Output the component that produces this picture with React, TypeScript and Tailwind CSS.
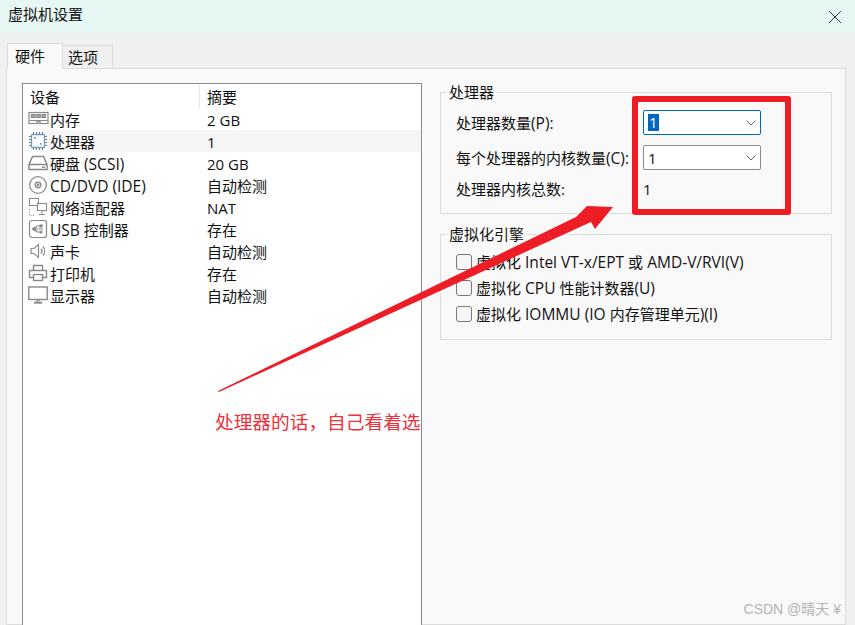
const FONT = 'font-["Open_Sans","Noto_Sans_CJK_SC",sans-serif]';

const G = "#8a8a8a";
const icons: Record<string, JSX.Element> = {
  mem: (
    <g fill="none" stroke={G} strokeWidth="1.2">
      <rect x="1" y="3.500" width="19" height="11" />
      <rect x="3.500" y="5.500" width="3.500" height="3" fill="#aaa" />
      <rect x="8.700" y="5.500" width="3.500" height="3" fill="#aaa" />
      <rect x="14" y="5.500" width="3.500" height="3" fill="#aaa" />
      <path d="M1.500 11.500h18M9 14.500v-2h3v2" />
    </g>
  ),
  cpu: (
    <g fill="none">
      <rect x="3.500" y="3.500" width="13" height="13" rx="1" stroke="#6a9fc4" strokeWidth="1.300" />
      <path d="M1 5.500h2M1 8.500h2M1 11.500h2M1 14.500h2M17 5.500h2M17 8.500h2M17 11.500h2M17 14.500h2M5.500 1v2M8.500 1v2M11.500 1v2M14.500 1v2M5.500 17v2M8.500 17v2M11.500 17v2M14.500 17v2" stroke="#777" />
      <rect x="6" y="6" width="1.600" height="1.600" fill="#777" />
      <rect x="12" y="12" width="1.600" height="1.600" fill="#5b8db3" />
    </g>
  ),
  disk: (
    <g fill="none" stroke={G} strokeWidth="1.500">
      <path d="M4.500 3.500h11l3.500 8v5H1v-5z" />
      <path d="M1 11.500h18" />
      <path d="M14 14.200h3" />
    </g>
  ),
  cd: (
    <g fill="none" stroke={G} strokeWidth="1.300">
      <circle cx="10" cy="10" r="8.300" />
      <circle cx="10" cy="10" r="2.800" />
      <circle cx="10" cy="10" r="0.800" fill={G} />
    </g>
  ),
  net: (
    <g fill="none" stroke={G} strokeWidth="1.100">
      <rect x="1.500" y="1.500" width="9" height="7" fill="#fff" />
      <rect x="9.500" y="6.500" width="9" height="7" fill="#fff" />
      <path d="M14 13.500v3M11 17.500h6" />
      <path d="M1.500 12v6.500h6" strokeDasharray="1 1.500" />
    </g>
  ),
  usb: (
    <g fill="none" stroke={G} strokeWidth="1.200">
      <rect x="1.500" y="1.500" width="17" height="17" rx="2.500" />
      <path d="M4 10h11M6.500 10l2.500-3h3M6.500 10l2.500 3h3" />
      <path d="M4.500 10l2-1.500v3z" fill={G} />
      <rect x="12" y="6" width="2" height="2" fill={G} />
      <circle cx="13" cy="13" r="1" fill={G} />
    </g>
  ),
  sound: (
    <g fill="none" stroke={G} strokeWidth="1.200">
      <path d="M3 7.500h3l4.500-4v13l-4.500-4h-3z" />
      <path d="M13 7.500a4 4 0 0 1 0 5M15 5.500a7 7 0 0 1 0 9" />
    </g>
  ),
  print: (
    <g fill="none" stroke={G} strokeWidth="1.400">
      <path d="M5.500 7V2.500h9V7" />
      <path d="M5 14.500H1.500V7.500h17v7H15" />
      <rect x="5.500" y="11.500" width="9" height="6" />
    </g>
  ),
  monitor: (
    <g fill="none" stroke={G} strokeWidth="1.400">
      <rect x="0.800" y="2" width="18.400" height="12.500" />
      <path d="M6 17.700h8" strokeWidth="2" />
      <path d="M9 14.500v2M11 14.500v2" />
    </g>
  ),
};

const rows = [
  ["mem", "内存", "2 GB"],
  ["cpu", "处理器", "1"],
  ["disk", "硬盘 (SCSI)", "20 GB"],
  ["cd", "CD/DVD (IDE)", "自动检测"],
  ["net", "网络适配器", "NAT"],
  ["usb", "USB 控制器", "存在"],
  ["sound", "声卡", "自动检测"],
  ["print", "打印机", "存在"],
  ["monitor", "显示器", "自动检测"],
];

function Mixed({ text }: { text: string }) {
  const parts = text.split(/([\x20-\x7e]+)/).filter(Boolean);
  return (
    <>
      {parts.map((p, i) =>
        /^[\x20-\x7e]+$/.test(p) ? (
          <span key={i} className="text-[15.500px]">
            {p}
          </span>
        ) : (
          <span key={i}>{p}</span>
        ),
      )}
    </>
  );
}

function Chevron() {
  return (
    <svg width="12" height="8" viewBox="0 0 12 8" className="shrink-0">
      <path d="M1.500 1.500 6 6l4.500-4.500" fill="none" stroke="#666" strokeWidth="1" />
    </svg>
  );
}

function Check({ label }: { label: string }) {
  return (
    <div className="flex h-[26px] items-center gap-[4px]">
      <span className="h-4 w-4 shrink-0 rounded-[3px] border border-[#777] bg-[#f6f6f6]" />
      <span className="whitespace-nowrap">
        <Mixed text={label} />
      </span>
    </div>
  );
}

export default function App() {
  return (
    <div className={`${FONT} relative h-[625px] w-[855px] overflow-hidden bg-[#f0f0f0] text-[15px] leading-[20px] text-[#111]`}>
      <div className="flex h-[33px] items-center justify-between bg-[#e6f6f3] pb-[6px] pl-2 pr-[13px]">
        <span>虚拟机设置</span>
        <svg width="14" height="14" viewBox="0 0 14 14" className="mt-[6px]">
          <path d="M1 1l12 12M13 1 1 13" stroke="#333" strokeWidth="1" fill="none" />
        </svg>
      </div>

      <div className="ml-[7px] mt-[10px] flex h-[25px] items-end">
        <div className="relative z-10 -mb-px flex h-[26px] w-[56px] items-center border border-b-0 border-[#dcdcdc] bg-[#f9f9f9] pb-[2px] pl-[7px]">硬件</div>
        <div className="flex h-[23px] w-[50px] items-center border border-b-0 border-l-0 border-[#dcdcdc] bg-[#f0f0f0] pl-[5px]">选项</div>
      </div>

      <div className="ml-[6px] flex h-[557px] w-[840px] gap-[18px] border border-[#dcdcdc] bg-[#f9f9f9] pl-[15px] pt-[14px]">
        <div className="h-[600px] w-[400px] shrink-0 border border-[#8c8c8c] bg-white">
          <div className="flex h-[24px] items-center pt-[1px]">
            <div className="flex h-full w-[177px] items-center border-r border-[#e5e5e5] pl-[7px]">设备</div>
            <div className="pl-[7px]">摘要</div>
          </div>
          {rows.map(([ic, name, val]) => (
            <div key={name} className="flex h-[22px] items-center">
              <svg width="21" height="20" viewBox="0 0 21 20" className="ml-[5px] shrink-0">
                {icons[ic]}
              </svg>
              <div className={`flex h-full flex-1 items-center pl-[1px] pt-[2px] ${ic === "cpu" ? "bg-[#f5f5f5]" : ""}`}>
                <span className="w-[157px] shrink-0 whitespace-nowrap">
                  <Mixed text={name} />
                </span>
                <span className="whitespace-nowrap">{val}</span>
              </div>
            </div>
          ))}
        </div>

        <div className="flex w-[392px] shrink-0 flex-col">
          <fieldset className="h-[132px] -mt-[1px] border border-[#dcdcdc] px-[15px]">
            <legend className="ml-[-9px] h-[20px] px-[2px]">处理器</legend>
            <div className="mt-[3px] flex h-[35px] items-center">
              <span className="w-[187px] shrink-0">
                <Mixed text="处理器数量(P):" />
              </span>
              <div className="flex h-[25px] w-[118px] items-center justify-between rounded-[2px] border border-[#0067c0] bg-white pl-[4px] pr-[3px]">
                <span className="bg-[#0067c0] px-[1px] leading-[17px] text-white">1</span>
                <Chevron />
              </div>
            </div>
            <div className="flex h-[35px] items-center">
              <span className="w-[187px] shrink-0 whitespace-nowrap">
                <Mixed text="每个处理器的内核数量(C):" />
              </span>
              <div className="flex h-[25px] w-[118px] items-center justify-between rounded-[2px] border border-[#8c8c8c] bg-white pl-[4px] pr-[3px]">
                <span>1</span>
                <Chevron />
              </div>
            </div>
            <div className="flex h-[28px] items-center">
              <span className="w-[187px] shrink-0">处理器内核总数:</span>
              <span>1</span>
            </div>
          </fieldset>

          <fieldset className="mt-[10px] h-[116px] border border-[#dcdcdc] px-[15px]">
            <legend className="ml-[-9px] h-[20px] px-[2px]">虚拟化引擎</legend>
            <div className="mt-[5px]">
              <Check label="虚拟化 Intel VT-x/EPT 或 AMD-V/RVI(V)" />
              <Check label="虚拟化 CPU 性能计数器(U)" />
              <Check label="虚拟化 IOMMU (IO 内存管理单元)(I)" />
            </div>
          </fieldset>
        </div>
      </div>

      {/* Annotations drawn over the screenshot */}
      <div className="absolute left-[632px] top-[96px] h-[119px] w-[159px] rounded-[3px] border-[6px] border-[#ee1c25]" />
      <svg width="855" height="625" className="pointer-events-none absolute left-0 top-0">
        <polygon points="218,391 576,217 587,206 613,207 595,229 591,222 219,392" fill="#ee1c25" />
      </svg>
      <div className="absolute left-[215px] top-[410px] w-[206px] overflow-hidden whitespace-nowrap text-[18.700px] leading-[24px] text-[#f0303a]">
        处理器的话，自己看着选
      </div>
      <div className="absolute right-[14px] top-[599px] font-['Liberation_Sans','Noto_Sans_CJK_SC',sans-serif] text-[14px] text-[#b3b3b3]">
        CSDN @晴天 ¥
      </div>
    </div>
  );
}
